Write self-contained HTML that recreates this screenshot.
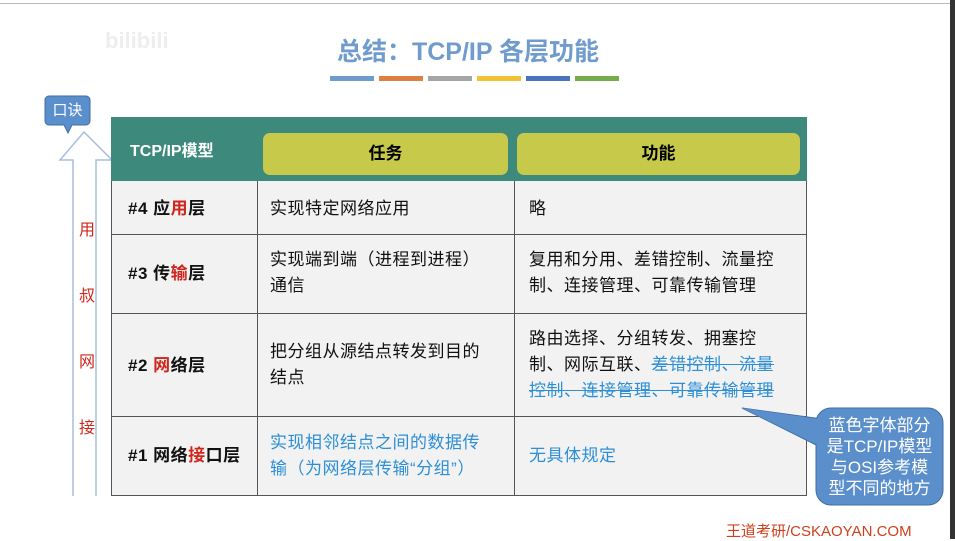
<!DOCTYPE html><html><head><meta charset="utf-8"><style>
body{margin:0;width:955px;height:539px;background:#fff;position:relative;overflow:hidden;font-family:"Liberation Sans","Noto Sans CJK SC",sans-serif}
.a{position:absolute}
.t{font-size:17px;letter-spacing:.5px;color:#111;line-height:26px;white-space:nowrap}
.blue{color:#2e8fd6}
.r{color:#d0261c}
.s{text-decoration:line-through}
</style></head><body>
<div class="a" style="left:0;top:3px;width:955px;height:1px;background:#bbb"></div>
<div class="a" style="left:950px;top:0;width:5px;height:539px;background:#333"></div>
<div class="a" style="left:105px;top:28px;font-size:22px;color:#eee;font-weight:bold">bilibili</div>
<div class="a" style="left:268px;top:32px;width:400px;text-align:center;font-size:25px;color:#6f9ccd;font-weight:bold">总结：TCP/IP 各层功能</div>
<div class="a" style="left:270px;top:76px;width:350px">
<div class="a" style="left:60px;width:44px;height:5px;background:#6f9ccd"></div>
<div class="a" style="left:109px;width:44px;height:5px;background:#dd7f3e"></div>
<div class="a" style="left:158px;width:44px;height:5px;background:#a5a5a5"></div>
<div class="a" style="left:207px;width:44px;height:5px;background:#f2c234"></div>
<div class="a" style="left:256px;width:44px;height:5px;background:#4a73bd"></div>
<div class="a" style="left:305px;width:44px;height:5px;background:#74ab4b"></div>
</div>
<svg class="a" style="left:0;top:0" width="955" height="539">
<path d="M73 496 L73 160 L60 160 L84 132 L112 160 L96 160 L96 496" fill="none" stroke="#a7bfdc" stroke-width="1.5"/>
<path d="M49 96 h37 a4 4 0 0 1 4 4 v21 a4 4 0 0 1 -4 4 h-14 l-4 8 l-4 -8 h-15 a4 4 0 0 1 -4 -4 v-21 a4 4 0 0 1 4 -4z" fill="#5b8fcc" stroke="#3f6ea6"/>
</svg>
<div class="a" style="left:45px;top:99px;width:45px;text-align:center;color:#fff;font-size:15px">口诀</div>
<div class="a" style="left:77px;top:198px;width:20px;font-size:16px;color:#d0261c;text-align:center;line-height:66px">用<br>叔<br>网<br>接</div>
<div class="a" style="left:111px;top:117px;width:696px;height:379px;background:#f2f2f2;border:1px solid #555;box-sizing:border-box"></div>
<div class="a" style="left:111px;top:117px;width:696px;height:64px;background:#3d8a7c"></div>
<div class="a" style="left:130px;top:137px;color:#fff;font-weight:bold;font-size:16px">TCP/IP模型</div>
<div class="a" style="left:263px;top:133px;width:245px;height:42px;border-radius:7px;background:#c7c94a;text-align:center;line-height:42px;font-size:17px;font-weight:bold">任务</div>
<div class="a" style="left:517px;top:133px;width:283px;height:42px;border-radius:7px;background:#c7c94a;text-align:center;line-height:42px;font-size:17px;font-weight:bold">功能</div>
<div class="a" style="left:111px;top:234px;width:696px;height:1px;background:#555"></div>
<div class="a" style="left:111px;top:313px;width:696px;height:1px;background:#555"></div>
<div class="a" style="left:111px;top:416px;width:696px;height:1px;background:#555"></div>
<div class="a" style="left:257px;top:181px;width:1px;height:315px;background:#555"></div>
<div class="a" style="left:514px;top:181px;width:1px;height:315px;background:#555"></div>
<div class="a t" style="left:128px;top:196px;font-weight:bold">#4 应<span class="r">用</span>层</div>
<div class="a t" style="left:270px;top:196px">实现特定网络应用</div>
<div class="a t" style="left:529px;top:196px">略</div>
<div class="a t" style="left:128px;top:261px;font-weight:bold">#3 传<span class="r">输</span>层</div>
<div class="a t" style="left:270px;top:247px">实现端到端（进程到进程）<br>通信</div>
<div class="a t" style="left:529px;top:247px">复用和分用、差错控制、流量控<br>制、连接管理、可靠传输管理</div>
<div class="a t" style="left:128px;top:353px;font-weight:bold">#2 <span class="r">网</span>络层</div>
<div class="a t" style="left:270px;top:339px">把分组从源结点转发到目的<br>结点</div>
<div class="a t" style="left:529px;top:326px">路由选择、分组转发、拥塞控<br>制、网际互联、<span class="blue s">差错控制、流量</span><br><span class="blue s">控制、连接管理、可靠传输管理</span></div>
<div class="a t" style="left:128px;top:443px;font-weight:bold">#1 网络<span class="r">接</span>口层</div>
<div class="a t blue" style="left:270px;top:430px">实现相邻结点之间的数据传<br>输（为网络层传输“分组”）</div>
<div class="a t blue" style="left:529px;top:443px">无具体规定</div>
<svg class="a" style="left:0;top:0" width="955" height="539">
<path d="M742 408 L830 420 L830 452 Z" fill="#5b8fcc" stroke="#3f6ea6"/>
<rect x="816" y="408" width="127" height="97" rx="15" fill="#5b8fcc" stroke="#3f6ea6"/>
<path d="M742 408 L831 421 L831 451 Z" fill="#5b8fcc"/>
</svg>
<div class="a" style="left:816px;top:415px;width:127px;text-align:center;color:#fff;font-size:17px;line-height:21px">蓝色字体部分<br>是TCP/IP模型<br>与OSI参考模<br>型不同的地方</div>
<div class="a" style="left:726px;top:520px;font-size:15px;color:#d0401c">王道考研/CSKAOYAN.COM</div>
</body></html>
